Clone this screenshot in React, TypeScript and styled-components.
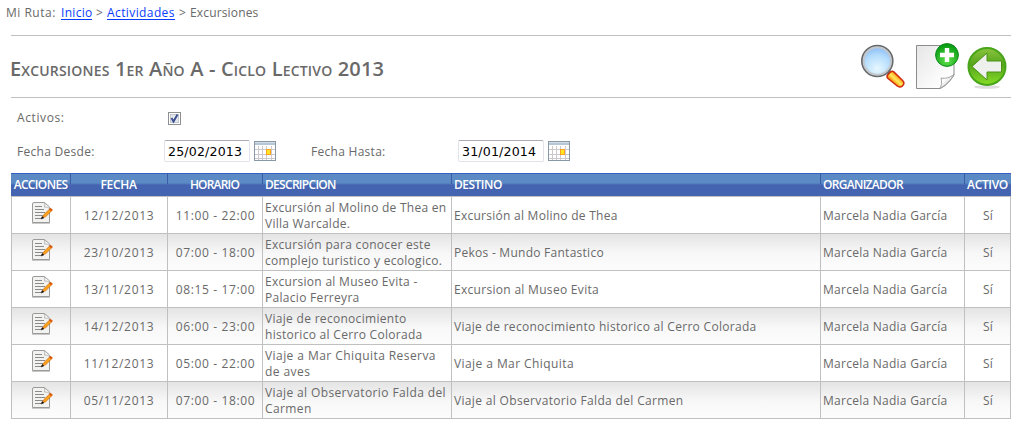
import React from "react";
import styled, { createGlobalStyle } from "styled-components";

const GlobalStyle = createGlobalStyle`
  body { margin: 0; background: #fff; }
  * { box-sizing: border-box; }
`;

const Page = styled.div`
  width: 1024px;
  height: 435px;
  overflow: hidden;
  padding: 5px 13px 0 11px;
  font-family: "Open Sans", "Noto Sans", sans-serif;
  font-size: 12px;
  color: #696969;
`;

const Breadcrumb = styled.nav`
  display: flex;
  gap: 4px;
  height: 30px;
  margin-left: -5px;
  line-height: 16px;
  white-space: nowrap;
`;

const Crumb = styled.span<{ $width?: number; $spacing?: number }>`
  width: ${(p) => (p.$width ? `${p.$width}px` : "auto")};
  letter-spacing: ${(p) => p.$spacing ?? 0}px;
`;

const CrumbLink = styled.a<{ $width: number; $spacing: number }>`
  width: ${(p) => p.$width}px;
  height: 15px;
  letter-spacing: ${(p) => p.$spacing}px;
  color: #0a3cff;
  border-bottom: 1px solid #0a3cff;
  text-decoration: none;
`;

const TitleBar = styled.header`
  display: flex;
  justify-content: space-between;
  height: 63px;
  border-top: 1px solid #c0c0c0;
  border-bottom: 1px solid #c0c0c0;
`;

const Title = styled.h1`
  margin: 0;
  padding-top: 20px;
  margin-left: -1px;
  font-size: 20px;
  line-height: 26px;
  font-weight: 600;
  font-variant: small-caps;
  letter-spacing: 0.18px;
  white-space: nowrap;
`;

const Tools = styled.div`
  display: flex;
  padding-top: 4px;
`;

const Filters = styled.form`
  padding-left: 6px;
  height: 75px;
`;

const FilterRow = styled.div<{ $height: number }>`
  display: grid;
  grid-template-columns: 147px 147px 147px 147px;
  align-items: center;
  height: ${(p) => p.$height}px;
  letter-spacing: 0.28px;
`;

const CheckField = styled.div`
  display: flex;
  padding: 5px 0 0 4px;
`;

const FilterLabel = styled.label`
  padding-top: 3px;
  letter-spacing: 0.6px;
`;

const DateField = styled.div`
  display: flex;
  align-items: center;
  gap: 4px;
`;

const DateInput = styled.input`
  width: 86px;
  height: 22px;
  padding: 0 0 0 3px;
  border: 1px solid #e2e3ea;
  border-top-color: #abadb3;
  border-radius: 2px;
  font-family: "DejaVu Sans", sans-serif;
  font-size: 12.6px;
  letter-spacing: 0.16px;
  color: #000;
  outline: none;
`;

const Table = styled.div`
  width: 1000px;
`;

const Row = styled.div`
  display: grid;
  grid-template-columns: 59px 97px 95px 189px 369px 144px 47px;
`;

const HeadRow = styled(Row)`
  height: 23px;
  background: linear-gradient(#3560c4 0 1px, #5b8ac4 1px 10px, #4463b0 12px 100%);
`;

const HeadCell = styled.div<{ $center?: boolean; $spacing?: number }>`
  padding-left: ${(p) => (p.$center ? 0 : 3)}px;
  text-align: ${(p) => (p.$center ? "center" : "left")};
  letter-spacing: ${(p) => p.$spacing ?? 0}px;
  font-weight: 600;
  font-size: 12px;
  line-height: 24px;
  color: #fff;
  white-space: nowrap;
  background: linear-gradient(90deg, #3a5ca8 1px, transparent 1px) 0 0 / 100% 11px no-repeat;
  &:first-child { background: none; }
`;

const BodyRow = styled(Row)<{ $shaded: boolean }>`
  height: 37px;
  background: ${(p) => (p.$shaded ? "linear-gradient(#e4e4e4, #f8f8f8 55%, #fcfcfc)" : "#fff")};
  border-top: 1px solid #c0c0c0;
  border-right: 1px solid #c0c0c0;
  &:last-child {
    height: 38px;
    border-bottom: 1px solid #c0c0c0;
  }
`;

const Cell = styled.div<{ $center?: boolean; $spacing?: number }>`
  display: flex;
  align-items: center;
  justify-content: ${(p) => (p.$center ? "center" : "flex-start")};
  padding: 2px 0 0 ${(p) => (p.$center ? 0 : 2)}px;
  border-left: 1px solid #c0c0c0;
  letter-spacing: ${(p) => p.$spacing ?? 0.26}px;
  line-height: 16px;
  white-space: pre;
`;

const TimeCell = styled(Cell)`
  padding-left: 1px;
`;

const ActionCell = styled(Cell)`
  align-items: flex-start;
  padding: 5px 0 0 2px;
`;

const SearchIcon = () => (
  <svg width="53" height="50" viewBox="0 0 53 50">
    <defs>
      <radialGradient id="lens" cx=".5" cy=".75" r=".75">
        <stop offset="0" stopColor="#e8f8ff" />
        <stop offset=".6" stopColor="#b3dcfd" />
        <stop offset="1" stopColor="#86b5f3" />
      </radialGradient>
      <linearGradient id="handle" x1="0" y1="1" x2="1" y2="0">
        <stop offset="0" stopColor="#f04a00" />
        <stop offset=".35" stopColor="#ff9a10" />
        <stop offset=".5" stopColor="#ffec60" />
        <stop offset=".65" stopColor="#ffa51a" />
        <stop offset="1" stopColor="#f06a00" />
      </linearGradient>
    </defs>
    <path d="M30 31l4 4" stroke="#777" strokeWidth="4" />
    <path d="M29.500 38c-.8-1.200-.5-2.500.6-3.600l2.300-2.300c1-1 2.300-1.100 3.400-.2l8.800 8.600c1.600 1.600 1.500 3.600.2 5-1.400 1.700-3.800 2-5.500.5z" fill="url(#handle)" stroke="#cf2a10" strokeWidth="1.500" />
    <circle cx="19.300" cy="21" r="15.300" fill="url(#lens)" stroke="#66696c" strokeWidth="2" />
    <circle cx="19.300" cy="21" r="13.700" fill="none" stroke="#c3c8cc" strokeWidth="2" />
  </svg>
);

const NewPageIcon = () => (
  <svg width="54" height="50" viewBox="0 0 54 50">
    <defs>
      <linearGradient id="sheet" x1="0" y1="0" x2="1" y2="1">
        <stop offset="0" stopColor="#e6e6e6" />
        <stop offset=".75" stopColor="#fdfdfd" />
      </linearGradient>
      <linearGradient id="curl" x1="0" y1="0" x2="1" y2="1">
        <stop offset="0" stopColor="#c9c9c9" />
        <stop offset=".35" stopColor="#ffffff" />
        <stop offset=".65" stopColor="#d8d8d8" />
      </linearGradient>
      <radialGradient id="plus" cx=".5" cy=".75" r=".7">
        <stop offset="0" stopColor="#5fe04a" />
        <stop offset="1" stopColor="#079b13" />
      </radialGradient>
    </defs>
    <path d="M5.500 5.500h37.500v29.500C40 40 35 46 29 48.500h-23.500z" fill="url(#sheet)" stroke="#8c8c8c" />
    <path d="M28.500 48.500c2.500-3 2.300-7 1.500-10.500 4 1 9-.5 13-3.500-3 5.500-8.500 11.500-14.500 14z" fill="url(#curl)" stroke="#8f8f8f" strokeWidth=".8" />
    <circle cx="36" cy="15" r="11.400" fill="url(#plus)" stroke="#0b8a18" />
    <path d="M33.800 8h4.400v4.800h4.800v4.400h-4.800v4.800h-4.400v-4.800h-4.800v-4.400h4.800z" fill="#fff" />
  </svg>
);

const BackIcon = () => (
  <svg width="46" height="50" viewBox="0 0 46 50">
    <defs>
      <linearGradient id="disc" x1="0" y1="0" x2="0" y2="1">
        <stop offset="0" stopColor="#8cc43f" />
        <stop offset=".45" stopColor="#55a51c" />
        <stop offset="1" stopColor="#86dc25" />
      </linearGradient>
    </defs>
    <ellipse cx="22" cy="47" rx="13" ry="1.800" fill="#dedede" />
    <circle cx="22" cy="26.500" r="18.500" fill="url(#disc)" stroke="#48a51a" strokeWidth="2" />
    <path d="M7 26.500L22 13v8h14.500v11H22v8z" fill="#eef0ee" stroke="#4b9217" />
  </svg>
);

const CalendarIcon = () => (
  <svg width="22" height="20" viewBox="0 0 22 20">
    <rect x=".5" y=".5" width="21" height="19" fill="#fff" stroke="#8797a6" />
    <path d="M1 1h20v3H1z" fill="#b7c6d4" />
    <path d="M1 1.500h20" stroke="#d3dde6" />
    <path d="M4.500 5v14M8.500 5v14M12.500 5v14M17.500 5v14M1 8.500h20M1 13.500h20M1 17.500h20" stroke="#ccc8cc" />
    <path d="M12 8h5v6h-5z" fill="#ffa21f" />
    <path d="M13 9h3v4h-3z" fill="#ffe620" />
  </svg>
);

const EditIcon = () => (
  <svg width="22" height="22" viewBox="0 0 22 22">
    <path d="M1 21.500h18" stroke="#c9c9c9" />
    <path d="M1.500 2q0-1.500 1.500-1.500h10.500l5 4.500v15.500h-17z" fill="#f2f3f0" stroke="#9a9b99" />
    <path d="M13 .5q1.500 2.500.5 4.500 3-.5 5 1.500V5z" fill="#fff" stroke="#a6a6a6" strokeWidth=".8" />
    <path d="M4 4.500h7M4 7.500h9M4 10.500h10M4 13.500h8M4 16.500h6" stroke="#8b8c8a" />
    <path d="M11 16l2-3.500 6.500-6.300 1.900 1.900-6.600 6.500z" fill="#ffa51b" stroke="#d2690c" strokeWidth=".8" />
    <path d="M18.200 7.400l1.400-1.300 1.900 1.900-1.400 1.300z" fill="#d9530f" />
    <path d="M10 17l1.300-2.500 1.500 1.500z" fill="#111" stroke="#111" strokeWidth=".5" />
  </svg>
);

const Check = () => (
  <svg width="13" height="13" viewBox="0 0 13 13">
    <rect x=".5" y=".5" width="12" height="12" fill="#fff" stroke="#8e8f8f" />
    <rect x="2.500" y="2.500" width="8" height="8" fill="#e5e8eb" stroke="#c3c8cf" />
    <path d="M3.500 6l2 3.500L9.500 2.500" fill="none" stroke="#3a4e91" strokeWidth="1.900" />
  </svg>
);

const trips = [
  { date: "12/12/2013", time: "11:00 - 22:00", description: "Excursión al Molino de Thea en\nVilla Warcalde.", place: "Excursión al Molino de Thea", spacing: 0.25 },
  { date: "23/10/2013", time: "07:00 - 18:00", description: "Excursión para conocer este\ncomplejo turistico y ecologico.", place: "Pekos - Mundo Fantastico", spacing: 0.3 },
  { date: "13/11/2013", time: "08:15 - 17:00", description: "Excursion al Museo Evita -\nPalacio Ferreyra", place: "Excursion al Museo Evita", placeSpacing: 0.3, spacing: 0.3 },
  { date: "14/12/2013", time: "06:00 - 23:00", description: "Viaje de reconocimiento\nhistorico al Cerro Colorada", place: "Viaje de reconocimiento historico al Cerro Colorada", placeSpacing: 0.3, spacing: 0.3 },
  { date: "11/12/2013", time: "05:00 - 22:00", description: "Viaje a Mar Chiquita Reserva\nde aves", place: "Viaje a Mar Chiquita", placeSpacing: 0.42, spacing: 0.43 },
  { date: "05/11/2013", time: "07:00 - 18:00", description: "Viaje al Observatorio Falda del\nCarmen", place: "Viaje al Observatorio Falda del Carmen", placeSpacing: 0.34, spacing: 0.38 },
];

export default function App() {
  return (
    <Page>
      <GlobalStyle />
      <Breadcrumb>
        <Crumb $width={51} $spacing={0.5}>Mi Ruta:</Crumb>
        <CrumbLink $width={31} $spacing={0.3}>Inicio</CrumbLink>
        <Crumb $width={7}>&gt;</Crumb>
        <CrumbLink $width={68} $spacing={0.4}>Actividades</CrumbLink>
        <Crumb $width={7}>&gt;</Crumb>
        <Crumb $spacing={0.15}>Excursiones</Crumb>
      </Breadcrumb>
      <TitleBar>
        <Title>Excursiones 1er Año A - Ciclo Lectivo 2013</Title>
        <Tools>
          <SearchIcon />
          <NewPageIcon />
          <BackIcon />
        </Tools>
      </TitleBar>
      <Filters>
        <FilterRow $height={36}>
          <FilterLabel>Activos:</FilterLabel>
          <CheckField>
            <Check />
          </CheckField>
        </FilterRow>
        <FilterRow $height={34}>
          <span>Fecha Desde:</span>
          <DateField>
            <DateInput defaultValue="25/02/2013" />
            <CalendarIcon />
          </DateField>
          <span>Fecha Hasta:</span>
          <DateField>
            <DateInput defaultValue="31/01/2014" />
            <CalendarIcon />
          </DateField>
        </FilterRow>
      </Filters>
      <Table>
        <HeadRow>
          <HeadCell $center $spacing={-0.65}>ACCIONES</HeadCell>
          <HeadCell $center $spacing={-0.3}>FECHA</HeadCell>
          <HeadCell $center $spacing={-0.8}>HORARIO</HeadCell>
          <HeadCell $spacing={-0.7}>DESCRIPCION</HeadCell>
          <HeadCell $spacing={-0.5}>DESTINO</HeadCell>
          <HeadCell $spacing={-0.7}>ORGANIZADOR</HeadCell>
          <HeadCell $center $spacing={-0.35}>ACTIVO</HeadCell>
        </HeadRow>
        {trips.map((trip, i) => (
          <BodyRow key={trip.date} $shaded={i % 2 === 1}>
            <ActionCell $center><EditIcon /></ActionCell>
            <Cell $center $spacing={0.7}>{trip.date}</Cell>
            <TimeCell $center $spacing={0.65}>{trip.time}</TimeCell>
            <Cell $spacing={trip.spacing}>{trip.description}</Cell>
            <Cell $spacing={trip.placeSpacing}>{trip.place}</Cell>
            <Cell>Marcela Nadia García</Cell>
            <Cell $center>Sí</Cell>
          </BodyRow>
        ))}
      </Table>
    </Page>
  );
}
